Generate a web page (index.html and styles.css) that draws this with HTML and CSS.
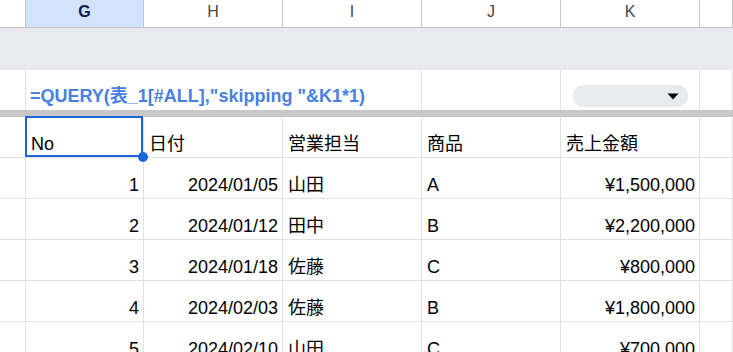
FILE: index.html
```html
<!DOCTYPE html>
<html>
<head>
    <title>Sheet</title>
    <link rel="stylesheet" href="styles.css">
</head>
<body>
<div class="sheet">
    <div class="row col-head">
        <div class="cell"></div>
        <div class="cell active">G</div>
        <div class="cell">H</div>
        <div class="cell">I</div>
        <div class="cell">J</div>
        <div class="cell">K</div>
        <div class="cell"></div>
    </div>
    <div class="band"></div>
    <div class="row formula-row">
        <div class="cell"></div>
        <div class="cell formula">=QUERY(表_1[#ALL],"skipping "&amp;K1*1)</div>
        <div class="cell"></div>
        <div class="cell">
            <div class="chip">
                <svg width="12" height="7" viewBox="0 0 12 7"><path d="M0.5 0.5h11L6 6.5z" fill="#000"/></svg>
            </div>
        </div>
        <div class="cell"></div>
    </div>
    <div class="freeze"></div>
    <div class="row data">
        <div class="cell"></div>
        <div class="cell selected">No<span class="handle"></span></div>
        <div class="cell">日付</div>
        <div class="cell">営業担当</div>
        <div class="cell">商品</div>
        <div class="cell">売上金額</div>
        <div class="cell"></div>
    </div>
    <div class="row data">
        <div class="cell"></div>
        <div class="cell num">1</div>
        <div class="cell num">2024/01/05</div>
        <div class="cell">山田</div>
        <div class="cell">A</div>
        <div class="cell num">¥1,500,000</div>
        <div class="cell"></div>
    </div>
    <div class="row data">
        <div class="cell"></div>
        <div class="cell num">2</div>
        <div class="cell num">2024/01/12</div>
        <div class="cell">田中</div>
        <div class="cell">B</div>
        <div class="cell num">¥2,200,000</div>
        <div class="cell"></div>
    </div>
    <div class="row data">
        <div class="cell"></div>
        <div class="cell num">3</div>
        <div class="cell num">2024/01/18</div>
        <div class="cell">佐藤</div>
        <div class="cell">C</div>
        <div class="cell num">¥800,000</div>
        <div class="cell"></div>
    </div>
    <div class="row data">
        <div class="cell"></div>
        <div class="cell num">4</div>
        <div class="cell num">2024/02/03</div>
        <div class="cell">佐藤</div>
        <div class="cell">B</div>
        <div class="cell num">¥1,800,000</div>
        <div class="cell"></div>
    </div>
    <div class="row data">
        <div class="cell"></div>
        <div class="cell num">5</div>
        <div class="cell num">2024/02/10</div>
        <div class="cell">山田</div>
        <div class="cell">C</div>
        <div class="cell num">¥700,000</div>
        <div class="cell"></div>
    </div>
</div>
</body>
</html>
```

FILE: styles.css
```css
body {
    margin: 0;
    background: #fff;
    font-family: "Liberation Sans", Arial, "Noto Sans CJK JP", sans-serif;
    overflow: hidden;
}
.sheet {
    width: 733px;
    height: 352px;
    overflow: hidden;
}
.row {
    display: grid;
    grid-template-columns: 26px 118px 139px 139px 139px 139px 1fr;
}
.cell {
    box-sizing: border-box;
    border-right: 1px solid #e1e1e1;
    position: relative;
}
.col-head {
    height: 28px;
    border-bottom: 1px solid #c4c7c5;
    box-sizing: border-box;
}
.col-head .cell {
    border-right-color: #c4c7c5;
    display: flex;
    align-items: center;
    justify-content: center;
    padding-bottom: 3px;
    font-size: 16px;
    color: #444746;
}
.col-head .active {
    background: #d3e3fd;
    color: #0b1f46;
    font-weight: bold;
}
.band {
    height: 42px;
    background: #e9eaed;
}
.formula-row {
    grid-template-columns: 26px 396px 139px 139px 1fr;
    height: 40px;
}
.formula {
    display: flex;
    align-items: flex-end;
    padding: 0 0 4px 4px;
    font-size: 18px;
    line-height: 20px;
    font-weight: bold;
    color: #4a80e0;
    white-space: nowrap;
}
.chip {
    margin: 15px 0 0 12px;
    width: 115px;
    height: 22px;
    border-radius: 11px;
    background: #e8eaed;
    display: flex;
    align-items: center;
    justify-content: flex-end;
    padding-right: 9px;
    box-sizing: border-box;
}
.freeze {
    height: 7px;
    background: #c8c8c8;
}
.data .cell {
    height: 41px;
    border-bottom: 1px solid #e1e1e1;
    display: flex;
    align-items: flex-end;
    padding: 0 4px 3px 5px;
    font-size: 18px;
    line-height: 20px;
    color: #000;
    white-space: nowrap;
}
.data .num {
    justify-content: flex-end;
}
.selected::after {
    content: "";
    position: absolute;
    left: -1px;
    right: 0;
    top: -1px;
    bottom: 0;
    border: 2px solid #1a66d8;
}
.handle {
    position: absolute;
    right: -5px;
    bottom: -5px;
    width: 10px;
    height: 10px;
    border-radius: 50%;
    background: #1a66d8;
    z-index: 2;
}
```
